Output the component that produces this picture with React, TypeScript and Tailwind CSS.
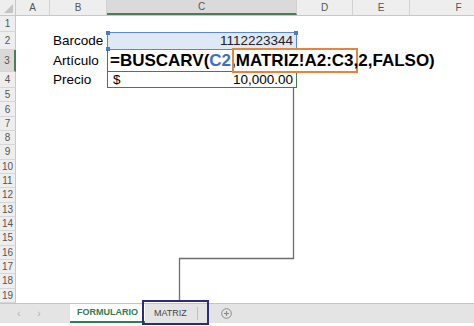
import React from "react";

const COLS = [
  { k: "A", w: "w-[34px]" },
  { k: "B", w: "w-[57px]" },
  { k: "C", w: "w-[190px]" },
  { k: "D", w: "w-[56px]" },
  { k: "E", w: "w-[57px]" },
  { k: "F", w: "w-[98px]" },
];

function RowHead({ n, h, active }: { n: number; h: string; active?: boolean }) {
  return (
    <div
      className={`${h} w-[16px] shrink-0 flex items-center justify-center text-[10px] text-[#555] border-b border-[#d6d6d6] ${
        active ? "bg-[#d9d9d9] border-r-2 border-r-[#4e7a5a]" : "bg-[#eeeeee] border-r border-r-[#c8c8c8]"
      }`}
    >
      {n}
    </div>
  );
}

export default function App() {
  const smallRows = Array.from({ length: 15 }, (_, i) => i + 5);
  return (
    <div className="relative w-[474px] h-[326px] bg-white overflow-hidden flex flex-col font-['Liberation_Sans',Arial,sans-serif] text-black">
      {/* column headers */}
      <div className="flex h-[16px] shrink-0 border-b border-[#c8c8c8] bg-[#eeeeee]">
        <div className="w-[16px] shrink-0 border-r border-[#c8c8c8] relative">
          <svg className="absolute right-[2px] bottom-[2px]" width="9" height="9" viewBox="0 0 9 9">
            <polygon points="9,0 9,9 0,9" fill="#c4c4c4" />
          </svg>
        </div>
        {COLS.map((c) => (
          <div
            key={c.k}
            className={`${c.w} shrink-0 flex items-center justify-center text-[10px] text-[#555] border-r border-[#d2d2d2] ${
              c.k === "C" ? "bg-[#dadada] border-b-2 border-b-[#4e7a5a]" : ""
            }`}
          >
            {c.k}
          </div>
        ))}
      </div>

      {/* row 1 */}
      <div className="flex h-[16px] shrink-0">
        <RowHead n={1} h="h-[16px]" />
      </div>

      {/* row 2 */}
      <div className="flex h-[18px] shrink-0">
        <RowHead n={2} h="h-[18px]" />
        <div className="w-[34px] shrink-0" />
        <div className="w-[57px] shrink-0 flex items-center pl-[3px] text-[13.5px] leading-none">Barcode</div>
        <div className="relative w-[190px] shrink-0 bg-[#dfe8f5] border border-[#5b88d2] flex items-center justify-end pr-[3px] text-[13.5px] leading-none text-[#222]">
          1112223344
          <span className="absolute -left-[2px] -top-[2px] w-[4px] h-[4px] bg-[#4a7bd0]" />
          <span className="absolute -left-[2px] -bottom-[2px] w-[4px] h-[4px] bg-[#4a7bd0]" />
          <span className="absolute -right-[2px] -top-[2px] w-[4px] h-[4px] bg-[#4a7bd0]" />
        </div>
      </div>

      {/* row 3 */}
      <div className="flex h-[22px] shrink-0">
        <RowHead n={3} h="h-[22px]" active />
        <div className="w-[34px] shrink-0" />
        <div className="w-[57px] shrink-0 flex items-center pl-[3px] text-[13.5px] leading-none">Artículo</div>
        <div className="relative z-10 w-[190px] shrink-0 border-l border-b border-[#52745a] flex items-center pl-[2px] whitespace-nowrap overflow-visible text-[17px] font-bold leading-none">
          <span>=BUSCARV(</span>
          <span className="text-[#3b6fc6]">C2</span>
          <span>,</span>
          <span className="outline-2 outline-solid outline-[#e8843a] outline-offset-[2px]">MATRIZ!A2:C3</span>
          <span>,2,FALSO)</span>
          <span className="inline-block w-px h-[19px] bg-black ml-[2px]" />
        </div>
      </div>

      {/* row 4 */}
      <div className="flex h-[16px] shrink-0">
        <RowHead n={4} h="h-[16px]" />
        <div className="w-[34px] shrink-0" />
        <div className="w-[57px] shrink-0 flex items-center pl-[3px] text-[13.5px] leading-none">Precio</div>
        <div className="w-[190px] shrink-0 border-l border-r border-b border-[#52745a] flex items-center justify-between px-[5px] pr-[3px] text-[13.5px] leading-none">
          <span>$</span>
          <span>10,000.00</span>
        </div>
      </div>

      {/* rows 5-19 */}
      {smallRows.map((n) => (
        <div key={n} className="flex h-[14.33px] shrink-0">
          <RowHead n={n} h="h-[14.33px]" />
        </div>
      ))}

      {/* sheet tabs */}
      <div className="flex h-[20px] shrink-0 bg-[#e4e4e4] border-t border-[#c4c4c4] text-[9px]">
        <div className="w-[70px] shrink-0 flex items-center text-[#b0b0b0] text-[10px]">
          <span className="ml-[17px]">‹</span>
          <span className="ml-[17px]">›</span>
        </div>
        <div className="w-[75px] shrink-0 bg-white border-b-2 border-[#2f7d52] flex items-center justify-center font-bold text-[#2f7d52]">
          FORMULARIO
        </div>
        <div className="w-[52px] shrink-0 flex items-center pl-[9px] text-[#444]">MATRIZ</div>
        <div className="w-px h-[13px] self-center bg-[#c0c0c0]" />
        <div className="ml-[23px] flex items-center">
          <svg width="11" height="11" viewBox="0 0 11 11">
            <circle cx="5.5" cy="5.5" r="4.8" fill="none" stroke="#8a8a8a" strokeWidth="1" />
            <line x1="5.5" y1="3" x2="5.5" y2="8" stroke="#8a8a8a" strokeWidth="1.1" />
            <line x1="3" y1="5.5" x2="8" y2="5.5" stroke="#8a8a8a" strokeWidth="1.1" />
          </svg>
        </div>
      </div>
      <div className="flex-1 bg-white" />

      {/* connector line */}
      <svg className="absolute left-0 top-0 pointer-events-none" width="474" height="326">
        <polyline points="293.5,88 293.5,258.5 179.5,258.5 179.5,300" fill="none" stroke="#6e6e6e" strokeWidth="1.3" />
      </svg>

      {/* navy highlight on MATRIZ tab */}
      <div className="absolute left-[142px] top-[300px] w-[67px] h-[25px] border-2 border-[#2e2b7a]" />
    </div>
  );
}
